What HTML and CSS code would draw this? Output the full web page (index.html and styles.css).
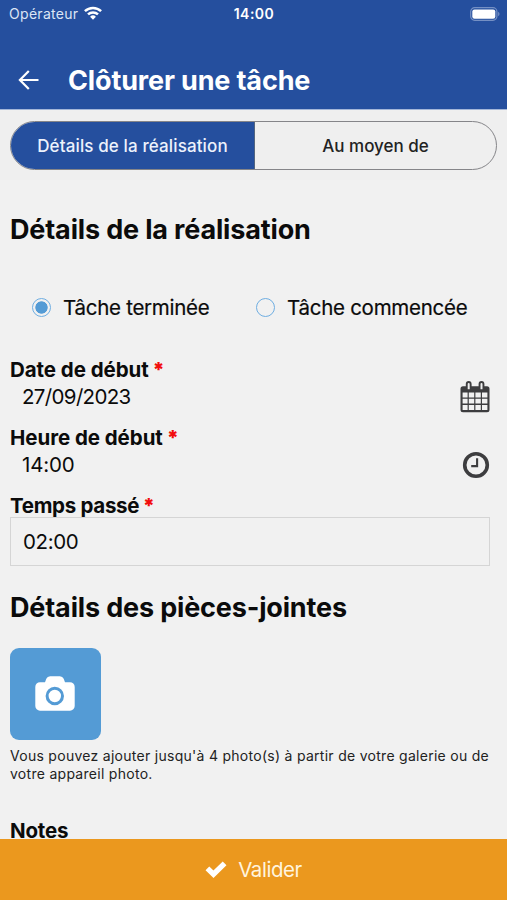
FILE: index.html
```html
<!DOCTYPE html>
<html lang="fr">
<head>
<meta charset="utf-8">
<title>Clôturer une tâche</title>
<link rel="stylesheet" href="styles.css">
</head>
<body>
<div class="app">
  <header class="header">
    <div class="status">
      <div class="carrier"><span class="carrier-name">Opérateur</span>
        <svg class="wifi" viewBox="0 0 18 14"><g fill="none" stroke="#fff" stroke-width="2.5"><path d="M.9 5.1a11.8 11.8 0 0 1 16.2 0"/><path d="M4 8.4a7.3 7.3 0 0 1 10 0"/></g><path d="M6.1 10.7a4.2 4.2 0 0 1 5.8 0L9 13.8z" fill="#fff"/></svg>
      </div>
      <span class="clock">14:00</span>
      <svg class="battery" viewBox="0 0 30 14"><rect x=".7" y=".7" width="26.2" height="12.6" rx="4" fill="none" stroke="#7590c4" stroke-width="1.2"/><rect x="2.3" y="2.4" width="23" height="9.3" rx="2.2" fill="#fff"/><path d="M28.1 4.8c1.9.8 1.9 3.6 0 4.4z" fill="#7590c4"/></svg>
    </div>
    <div class="titlebar">
      <svg class="back" viewBox="0 0 22 20"><path d="M20.5 10H2M10.8 1 1.9 10l8.9 9" fill="none" stroke="#fff" stroke-width="2.2"/></svg>
      <h1 class="title">Clôturer une tâche</h1>
    </div>
  </header>
  <nav class="tabs">
    <div class="segment">
      <div class="tab active"><span>Détails de la réalisation</span></div>
      <div class="tab"><span>Au moyen de</span></div>
    </div>
  </nav>
  <main class="content">
    <h2 class="heading first"><span>Détails de la réalisation</span></h2>
    <div class="radios">
      <label class="radio"><i class="dot checked"></i><span>Tâche terminée</span></label>
      <label class="radio"><i class="dot"></i><span>Tâche commencée</span></label>
    </div>
    <section class="field">
      <div class="label"><span>Date de début</span> <b>*</b></div>
      <div class="value"><span class="date">27/09/2023</span>
        <svg class="calendar" viewBox="0 0 30 32"><path fill="#3d3d3f" fill-rule="evenodd" d="M3 5.2h2.8V3a2.9 2.9 0 0 1 5.8 0v2.2h7V3a2.9 2.9 0 0 1 5.8 0v2.2H27a2.5 2.5 0 0 1 2.5 2.5v21A2.5 2.5 0 0 1 27 31.2H3a2.5 2.5 0 0 1-2.5-2.5v-21A2.5 2.5 0 0 1 3 5.2zM7.7 3v5.2h2V3a1 1 0 0 0-2 0zm12.8 0v5.2h2V3a1 1 0 0 0-2 0z"/><path fill="#f1f1f1" d="M2.6 11.4h5v5h-5zm6.2 0h5.4v5H8.8zm6.6 0h5.4v5h-5.4zm6.6 0h5.4v5H22zM2.6 17.8h5v4.7h-5zm6.2 0h5.4v4.7H8.8zm6.6 0h5.4v4.7h-5.4zm6.6 0h5.4v4.7H22zM2.6 24h5v5.1h-5zm6.2 0h5.4v5.1H8.8zm6.6 0h5.4v5.1h-5.4zM22 24h5.4v5.1H22z"/></svg>
      </div>
    </section>
    <section class="field">
      <div class="label"><span>Heure de début</span> <b>*</b></div>
      <div class="value"><span class="hour">14:00</span>
        <svg class="time" viewBox="0 0 28 28"><circle cx="14" cy="14" r="11.3" fill="none" stroke="#3d3d3f" stroke-width="3.6"/><path d="M15.1 7.3v7.8H9.2" fill="none" stroke="#3d3d3f" stroke-width="2.1"/></svg>
      </div>
    </section>
    <section class="field">
      <div class="label spent"><span>Temps passé</span> <b>*</b></div>
      <div class="input"><span>02:00</span></div>
    </section>
    <h2 class="heading second"><span>Détails des pièces-jointes</span></h2>
    <div class="photo">
      <svg viewBox="0 0 40 36"><path fill="#fff" d="M5 6.2h5l1.3-3.4A4.2 4.2 0 0 1 15.2.3h9.6a4.2 4.2 0 0 1 3.9 2.5L30 6.2h5a4.7 4.7 0 0 1 4.7 4.7V30a4.7 4.7 0 0 1-4.7 4.7H5A4.7 4.7 0 0 1 .3 30V10.9A4.7 4.7 0 0 1 5 6.2z"/><circle cx="19.8" cy="20" r="7.7" fill="none" stroke="#549bd5" stroke-width="3"/></svg>
    </div>
    <p class="hint"><span>Vous pouvez ajouter jusqu'à 4 photo(s) à partir de votre galerie ou de</span> <span>votre appareil photo.</span></p>
    <div class="label notes"><span>Notes</span></div>
  </main>
  <footer class="submit">
    <svg class="check" viewBox="0 0 22 18"><path d="M2.4 8.4 8.5 14.2 19.6 3.4" fill="none" stroke="#fff" stroke-width="5.4"/></svg>
    <span>Valider</span>
  </footer>
</div>
</body>
</html>
```
FILE: styles.css
```css
* { box-sizing: border-box; }
body { margin: 0; font-family: Inter, "Liberation Sans", sans-serif; color: #0b0b0b; background: #f1f1f1; }
svg { display: block; flex: none; }
span, h1 { white-space: nowrap; }
.app { width: 507px; height: 900px; overflow: hidden; display: flex; flex-direction: column; }
.header { flex: none; height: 110px; background: #254f9e; border-bottom: 1px solid #a4b6d8; color: #fff; }
.status { height: 28px; display: grid; grid-template-columns: 1fr auto 1fr; align-items: center; padding: 0 7px 0 9px; font-size: 14px; }
.carrier { display: flex; align-items: center; gap: 6px; color: #dce5f5; letter-spacing: .3px; }
.carrier-name, .clock { margin-top: -1px; }
.wifi { width: 18px; height: 14px; margin-top: -2px; }
.clock { font-weight: 600; font-size: 14px; letter-spacing: .5px; margin-left: -1px; }
.battery { width: 30px; height: 14px; justify-self: end; margin-top: -1px; }
.titlebar { display: flex; align-items: center; height: 50px; margin-top: 27px; padding-left: 18px; gap: 28px; }
.back { width: 22px; height: 20px; }
.title { margin: 2px 0 0; font-size: 27px; font-weight: 700; letter-spacing: -.15px; line-height: 40px; }
.tabs { flex: none; height: 70px; padding: 11px 10px 0; background: #efefef; }
.segment { display: flex; height: 49px; border: 1px solid #858589; border-radius: 25px; overflow: hidden; }
.tab { flex: 1; display: flex; align-items: center; justify-content: center; font-size: 17px; font-weight: 500; color: #222; }
.tab.active { flex: 0 0 244px; background: #254f9e; color: #edf2fc; border-right: 1px solid #53657f; letter-spacing: .12px; }
.content { flex: 1; min-height: 0; overflow: hidden; padding: 0 17px 0 10px; }
.heading { margin: 0; font-size: 27px; line-height: 36px; font-weight: 700; letter-spacing: -.16px; }
.first { margin-top: 32px; }
.radios { display: flex; margin-top: 45px; height: 30px; padding-left: 22px; }
.radio { display: flex; align-items: center; width: 224px; gap: 12px; font-size: 20.5px; line-height: 30px; letter-spacing: -.27px; }
.radio span { -webkit-text-stroke: .2px #0b0b0b; }
.dot { width: 19px; height: 19px; border: 1.5px solid #6faee2; border-radius: 50%; flex: none; margin-top: -1px; }
.dot.checked { background: radial-gradient(circle, #549bd5 0 5.8px, #f1f1f1 6.5px); }
.label { padding-top: 1px; height: 28px; font-size: 20.5px; line-height: 28px; font-weight: 700; letter-spacing: -.05px; }
.label b { color: #f20d0d; margin-left: -1px; font-size: 20px; line-height: 20px; }
.spent { letter-spacing: -.3px; }
.field { height: 68px; }
.radios + .field { margin-top: 32px; }
.value { display: flex; height: 28px; align-items: center; justify-content: space-between; padding-left: 12px; font-size: 20.5px; }
.value span { margin-top: -2px; }
.date { letter-spacing: -.65px; }
.hour { letter-spacing: -.15px; }
.calendar { width: 30px; height: 32px; }
.time { width: 28px; height: 28px; }
.input { height: 49px; margin-top: -2px; border: 1px solid #d5d5d5; display: flex; align-items: center; padding-left: 12px; font-size: 20.5px; letter-spacing: -.4px; }
.second { margin-top: 31px; }
.photo { width: 91.5px; height: 92px; margin: 22px 0 0 -.5px; border-radius: 9px; background: #549bd5; display: flex; align-items: center; justify-content: center; }
.photo svg { width: 40px; height: 36px; }
.hint { margin: 7px 0 0; font-size: 14px; line-height: 17.5px; letter-spacing: .28px; color: #222; }
.notes { margin-top: 34px; letter-spacing: -.2px; }
.submit { flex: none; height: 61px; background: #eb981e; display: flex; align-items: center; justify-content: center; gap: 11px; color: #fff4df; font-size: 20.5px; letter-spacing: -.45px; }
.check { width: 22px; height: 18px; margin-top: -1px; }
```
